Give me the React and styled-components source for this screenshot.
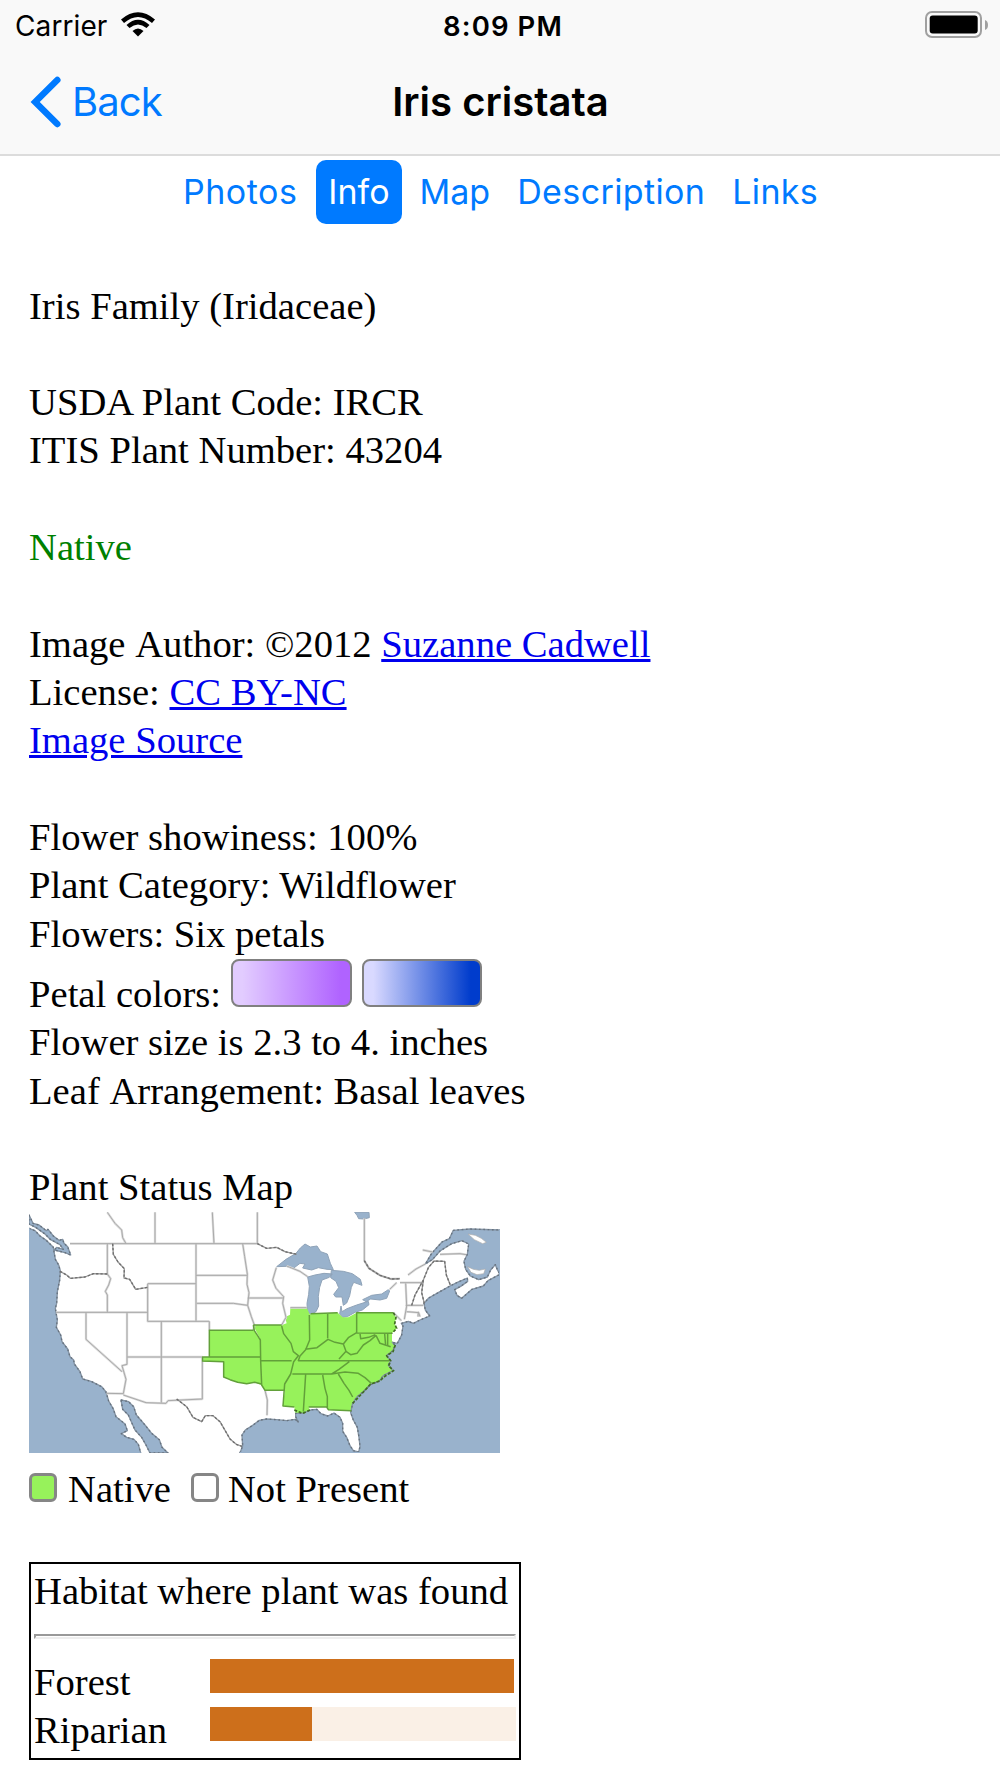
import React from "react";
import styled, { createGlobalStyle } from "styled-components";

const GlobalStyle = createGlobalStyle`
  * {
    box-sizing: border-box;
  }
  body {
    margin: 0;
    background: #fff;
  }
`;

const sans = `Inter, "Liberation Sans", sans-serif`;
const serif = `"Liberation Serif", "Times New Roman", serif`;

const Screen = styled.div`
  width: 1000px;
  height: 1778px;
  overflow: hidden;
  background: #fff;
`;

const Header = styled.header`
  height: 156px;
  background: #f9f9f9;
  border-bottom: 2px solid #dcdcdc;
  font-family: ${sans};
`;

const StatusBar = styled.div`
  display: grid;
  grid-template-columns: 1fr auto 1fr;
  align-items: center;
  height: 51px;
  padding: 0 12px 0 15px;
  line-height: 51px;
`;

const Carrier = styled.div`
  display: flex;
  align-items: center;
  padding-top: 1px;
  font-size: 28px;
  letter-spacing: 0.1px;

  svg {
    margin: -4px 0 0 14px;
  }
`;

const Time = styled.div`
  padding-left: 3px;
  font-size: 27.5px;
  font-weight: 600;
  letter-spacing: 1.1px;
`;

const BatteryBox = styled.div`
  display: flex;
  justify-content: flex-end;
  margin-top: -3px;
`;

const NavBar = styled.nav`
  display: grid;
  grid-template-columns: 1fr auto 1fr;
  align-items: center;
  height: 101px;
  padding: 0 30px;
`;

const BackButton = styled.a`
  display: flex;
  align-items: center;
  gap: 10px;
  color: #007aff;
  font-size: 40px;
  letter-spacing: -0.9px;
`;

const PageTitle = styled.h1`
  margin: 0;
  padding-left: 1px;
  font-size: 40px;
  font-weight: 600;
  letter-spacing: 0;
`;

const Tabs = styled.div`
  display: flex;
  justify-content: center;
  gap: 3px;
  padding: 4px 0 0 1px;
  font-family: ${sans};
`;

const Tab = styled.a`
  height: 64px;
  margin: ${({ $active }) => ($active ? "0 3px 0 4px" : "0")};
  padding: 0 12px;
  border-radius: 10px;
  background: ${({ $active }) => ($active ? "#007aff" : "transparent")};
  color: ${({ $active }) => ($active ? "#fff" : "#007aff")};
  font-size: 34px;
  letter-spacing: ${({ $tracking }) => $tracking}px;
  line-height: 63px;
`;

const Content = styled.main`
  padding: 57.5px 29px 0;
  font-family: ${serif};
  font-size: 38.64px;
  line-height: 48.33px;
`;

const Section = styled.section`
  margin-bottom: 48.33px;
`;

const Line = styled.div`
  color: ${({ $native }) => ($native ? "#008000" : "#000")};
  white-space: nowrap;
`;

// Set apart from the text before it, so that no kerning closes the space.
const CapitalA = styled.span`
  display: inline-block;
`;

const TextLink = styled.a`
  color: #0000ee;
  text-decoration: underline;
`;

const PetalLine = styled(Line)`
  display: flex;
  align-items: baseline;
  height: 60.4px;
  padding-top: 0.6px;
`;

const Swatch = styled.span`
  width: 120.5px;
  height: 48.5px;
  margin-left: 10px;
  border: 2.4px solid #808080;
  border-radius: 8px;
  background: linear-gradient(
    to right,
    ${({ $from }) => $from} 8%,
    ${({ $to }) => $to} 92%
  );
`;

const MapSvg = styled.svg`
  display: block;
  width: 471px;
  height: 241px;
`;

const Legend = styled.div`
  display: flex;
  align-items: baseline;
  margin-top: 12.4px;
`;

const LegendBox = styled.span`
  width: 28px;
  height: 29px;
  margin-right: 11px;
  border: 3px solid #868686;
  border-radius: 6px;
  background: ${({ $color }) => $color};

  &:not(:first-child) {
    margin: 0 9px 0 20px;
  }
`;

const Habitat = styled.section`
  width: 492px;
  height: 198px;
  margin-top: 48.5px;
  padding: 3px 3px 0;
  border: 2px solid #000;
`;

const Rule = styled.hr`
  height: 5px;
  margin: 19px 0 17px;
  border: 2px solid #eee;
  border-top-color: #999;
  border-left-color: #999;
`;

const HabitatRow = styled.div`
  display: flex;
  height: 48px;
`;

const HabitatName = styled.div`
  width: 176px;
  padding-top: 2px;
`;

const Track = styled.div`
  width: 306px;
  height: 34px;
  margin-top: 3px;
  background: #faf0e6;
`;

const Fill = styled.div`
  height: 100%;
  background: #cd6f1b;
  border-right: 2px solid ${({ $full }) => ($full ? "#fff" : "#cd6f1b")};
`;

const Wifi = () => (
  <svg width="34" height="25" viewBox="0 0 34 25">
    <path d="M0 7.500Q17-7 34 7.500L31 11Q17-1 3 11Z" />
    <path d="M5.500 13Q17 2.500 28.500 13L25.500 16Q17 9 8.500 16Z" />
    <path d="M11.500 19Q17 14 22.500 19L17 24.500Z" />
  </svg>
);

const Battery = () => (
  <svg width="63" height="28" viewBox="0 0 63 28">
    <rect
      x="1"
      y="1"
      width="55"
      height="25"
      rx="6"
      fill="none"
      stroke="#a0a0a0"
      strokeWidth="2"
    />
    <rect x="4.700" y="4.500" width="48" height="18" rx="3" />
    <path d="M60 9Q63 10 63 14T60 19Z" fill="#a0a0a0" />
  </svg>
);

const Chevron = () => (
  <svg width="32" height="52" viewBox="0 0 32 52">
    <path
      d="M27.300 4L5.200 26L27.300 48"
      fill="none"
      stroke="#007aff"
      strokeWidth="6.500"
      strokeLinecap="round"
      strokeLinejoin="miter"
    />
  </svg>
);

const seas = [
  // Pacific
  "27,85 45,92 60,108 80,122 100,142 102,155 106,178 116,195 121,212 119,240 112,275 110,310 106,325 108,337 112,360 109,382 122,405 126,425 143,447 150,470 161,480 163,492 180,515 188,537 215,545 245,560 258,576 266,603 279,625 288,650 315,672 322,692 304,701 320,712 342,718 355,733 362,759 27,759",
  // Strait of Georgia and Puget Sound
  "27,45 39,70 57,75 79,92 84,88 100,108 117,121 128,118 132,130 143,140 152,165 135,158 103,150 110,142 130,148 120,134 92,119 75,102 47,82 27,72",
  // Gulf of California
  "303,600 326,605 341,620 349,645 375,675 395,700 418,719 426,742 444,759 390,759 378,735 365,712 345,690 336,670 325,645 308,628",
  // Gulf of Mexico, Atlantic and Gulf of St Lawrence
  "660,759 668,737 666,705 676,690 698,676 718,661 740,657 770,659 800,662 826,658 835,667 827,650 827,640 848,640 872,630 890,628 903,641 923,648 942,639 960,652 968,670 968,694 980,712 990,737 1000,752 1016,756 1020,740 1017,712 1012,682 1000,660 992,638 998,610 1010,592 1032,573 1051,554 1077,544 1090,527 1119,512 1105,496 1112,482 1099,467 1119,452 1125,436 1117,427 1132,430 1145,405 1149,378 1144,370 1165,364 1180,370 1200,360 1229,348 1216,330 1212,310 1226,294 1256,277 1290,258 1312,247 1342,234 1343,244 1322,259 1304,269 1311,286 1325,295 1356,268 1390,258 1404,242 1440,223 1432,209 1426,194 1412,210 1402,231 1376,239 1351,228 1337,208 1332,184 1342,163 1346,132 1326,122 1295,131 1260,153 1238,178 1216,192 1235,160 1266,126 1288,116 1300,91 1350,87 1440,90 1440,759",
];

const lakes = [
  // Superior
  "770,200 798,178 828,160 841,144 855,132 871,141 891,138 902,155 922,162 931,190 940,209 921,208 895,203 875,210 848,204 855,192 840,190 819,206 799,199",
  // Michigan
  "863,231 885,225 912,220 937,222 928,232 906,240 899,262 895,289 896,318 888,335 872,343 862,334 861,310 866,283 868,259",
  // Huron
  "934,211 970,214 997,221 1021,238 1026,256 1001,247 994,262 989,287 980,309 970,316 966,291 947,291 941,283 956,263 948,244 932,233",
  // Erie
  "963,318 966,335 981,326 1010,315 1045,304 1047,314 1027,330 1005,337 982,350 968,352 959,342",
  // Ontario
  "1028,299 1055,286 1085,282 1105,269 1109,273 1100,295 1080,300 1052,297 1038,305",
  // James Bay
  "1004,37 1047,37 1048,53 1031,57 1016,56 1011,46",
];

const islands = [
  "1344,102 1366,106 1384,115 1399,127 1388,131 1363,119",
  "1343,200 1360,208 1378,211 1396,207 1391,221 1371,224 1353,217",
];

const nativeStates = [
  // Kansas
  "568,391 702,391 713,407 721,420 723,471 568,471",
  // Oklahoma
  "548,471 723,471 726,556 704,547 680,551 653,547 630,539 611,531 611,485 548,485",
  // Missouri to the Atlantic coast
  "699,375 785,375 800,370 795,352 810,344 811,325 861,325 869,343 910,340 953,338 968,352 985,352 1010,338 1120,338 1128,352 1124,372 1130,385 1116,400 1116,422 1126,435 1119,455 1100,467 1112,482 1106,498 1121,512 1096,528 1079,543 1052,552 1034,572 1010,591 998,610 996,633 925,629 921,621 866,621 870,631 850,641 825,638 823,621 788,618 795,570 735,571 724,555 721,483 720,415 711,399",
];

const borders = [
  "150,131 712,131",
  "108,337 383,337",
  "262,37 285,70 305,90 308,113 318,131",
  "405,37 405,131",
  "577,37 582,131",
  "712,37 712,131",
  "262,131 262,222 272,236 266,255 256,274 262,285 262,337",
  "383,251 528,251",
  "383,251 383,364 568,364",
  "528,131 528,364",
  "528,226 681,226",
  "668,131 674,170 682,222 681,253 687,278 683,316 694,350 703,375 700,390",
  "530,310 640,310 683,316",
  "683,294 790,294",
  "568,364 568,391",
  "198,337 198,418 306,515",
  "321,337 321,493 306,497 318,538 310,581 260,580",
  "321,471 548,471",
  "424,364 424,608",
  "310,585 378,608 438,610 444,602 547,597 547,472",
  "785,375 798,352 788,310 791,290 768,265 758,240 769,203",
  "811,323 860,323",
  "800,198 840,214 863,230",
  "1033,55 1033,182 1047,205 1080,226 1113,237 1140,236",
  "1140,248 1210,248",
  "1130,248 1109,268",
  "1157,250 1160,318 1153,358",
  "1157,316 1210,316",
  "1160,335 1196,338 1200,350",
  "1195,335 1194,350",
  "1216,192 1188,207 1164,225",
  "1260,163 1320,161 1338,164",
  "1208,150 1238,156",
  "1120,338 1144,362",
  "735,571 742,600 741,646",
];

const roughBorders = [
  "278,131 280,163 294,186 313,206 312,234 329,238 347,268 383,262",
  "120,214 140,225 151,235 195,231 220,221 262,222",
  "1175,316 1185,285 1199,260 1210,240 1225,203 1242,183 1274,184 1279,225 1291,255",
  "1210,240 1205,278 1213,310",
  "470,597 500,620 519,652 545,665 556,647 579,647 600,665 630,717 649,733 666,739",
  "712,131 740,145 770,142 795,155 830,163",
  "1033,182 1047,205 1080,226 1113,237 1140,236",
];

const nativeBorders = [
  "568,471 568,391 700,391",
  "548,485 548,471 721,471",
  "548,483 611,485 611,531 630,539 653,547 680,551 704,547 724,552",
  "700,375 785,375",
  "700,375 703,392 713,407 721,420 722,482 725,555 735,571 795,571",
  "722,482 815,482",
  "785,378 791,401 813,430 820,455 835,467 821,485 812,522 794,552 789,618 823,621",
  "868,345 869,420 857,449 840,468 835,482 1108,482",
  "872,341 953,338",
  "923,340 923,415",
  "855,448 891,443 924,418 945,427 970,432 985,413 1010,398",
  "1120,338 1010,338 1010,399 1116,400",
  "817,522 935,522 957,508 988,485",
  "970,432 978,454 957,477",
  "978,454 992,464 1011,460 1030,435 1050,422 1068,406",
  "1020,400 1022,416 1046,412 1066,404",
  "1068,406 1080,430 1112,440",
  "1094,402 1097,437",
  "1103,402 1103,437",
  "935,522 975,516 1015,520 1035,533 1054,550",
  "955,522 972,550 987,571 998,591",
  "908,525 915,565 922,590 922,622",
  "857,522 854,570 850,635",
  "866,621 920,621 925,629 994,632",
];

// Coast of the native states, drawn broken over the sea outline.
const nativeCoast = [
  "1120,338 1128,352 1124,372 1130,385 1116,400",
  "1126,435 1119,455 1100,467 1112,482 1106,498 1121,512 1096,528 1079,543 1052,552 1034,572 998,610",
  "823,630 848,640 870,630",
];

const toPath = (shapes) => shapes.map((points) => `M${points}`).join(" ");
const toArea = (shapes) => shapes.map((points) => `M${points}Z`).join(" ");

const StatusMap = () => (
  <MapSvg viewBox="27 36 1413 723" preserveAspectRatio="none">
    <rect x="27" y="36" width="1413" height="723" fill="#fff" />
    <path d={toArea(seas)} fill="#99b2cc" />
    <path d={toArea(lakes)} fill="#99b2cc" stroke="#8fa3b8" strokeWidth="3" />
    <path d={toArea(islands)} fill="#fff" stroke="#aaa" strokeWidth="2" />
    <path d={toArea(nativeStates)} fill="#97f25b" />
    <g fill="none" strokeLinejoin="round">
      <path d={toArea(seas)} stroke="#8292a3" strokeWidth="4" />
      <path
        d={toArea(seas)}
        stroke="#66717d"
        strokeWidth="4"
        strokeDasharray="5 8"
      />
      <path d={toPath(borders)} stroke="#dadada" strokeWidth="7" />
      <path d={toPath(borders)} stroke="#aaa" strokeWidth="3" />
      <path d={toPath(roughBorders)} stroke="#999" strokeWidth="4" />
      <path
        d={toPath(roughBorders)}
        stroke="#6e6e6e"
        strokeWidth="4"
        strokeDasharray="7 6"
      />
      <path d={toPath(nativeBorders)} stroke="#62a03a" strokeWidth="4.500" />
      <path
        d={toPath(nativeCoast)}
        stroke="#3f6b22"
        strokeWidth="5"
        strokeDasharray="9 5"
      />
    </g>
    <path
      d="M27,759V85M27,759H362M660,759H1440V90"
      fill="none"
      stroke="#99b2cc"
      strokeWidth="6"
    />
  </MapSvg>
);

const tabs = [
  { label: "Photos", tracking: 0.5 },
  { label: "Info", tracking: 0 },
  { label: "Map", tracking: 0 },
  { label: "Description", tracking: 0.38 },
  { label: "Links", tracking: 0.3 },
];

const habitats = [
  { name: "Forest", width: 306 },
  { name: "Riparian", width: 102 },
];

const App = () => {
  return (
    <Screen>
      <GlobalStyle />
      <Header>
        <StatusBar>
          <Carrier>
            Carrier
            <Wifi />
          </Carrier>
          <Time>8:09 PM</Time>
          <BatteryBox>
            <Battery />
          </BatteryBox>
        </StatusBar>
        <NavBar>
          <BackButton>
            <Chevron />
            Back
          </BackButton>
          <PageTitle>Iris cristata</PageTitle>
        </NavBar>
      </Header>
      <Tabs>
        {tabs.map(({ label, tracking }) => (
          <Tab key={label} $active={label === "Info"} $tracking={tracking}>
            {label}
          </Tab>
        ))}
      </Tabs>
      <Content>
        <Section>
          <Line>Iris Family (Iridaceae)</Line>
        </Section>
        <Section>
          <Line>USDA Plant Code: IRCR</Line>
          <Line>ITIS Plant Number: 43204</Line>
        </Section>
        <Section>
          <Line $native>Native</Line>
        </Section>
        <Section>
          <Line>
            Image <CapitalA>Author:</CapitalA> ©2012{" "}
            <TextLink>Suzanne Cadwell</TextLink>
          </Line>
          <Line>
            License: <TextLink>CC BY-NC</TextLink>
          </Line>
          <Line>
            <TextLink>Image Source</TextLink>
          </Line>
        </Section>
        <Section>
          <Line>Flower showiness: 100%</Line>
          <Line>Plant Category: Wildflower</Line>
          <Line>Flowers: Six petals</Line>
          <PetalLine>
            Petal colors:
            <Swatch $from="#e2ccff" $to="#b063ff" />
            <Swatch $from="#d9d9ff" $to="#003ccc" />
          </PetalLine>
          <Line>Flower size is 2.3 to 4. inches</Line>
          <Line>
            Leaf <CapitalA>Arrangement:</CapitalA> Basal leaves
          </Line>
        </Section>
        <Line>Plant Status Map</Line>
        <StatusMap />
        <Legend>
          <LegendBox $color="#97f25b" />
          Native
          <LegendBox $color="#fff" />
          Not Present
        </Legend>
        <Habitat>
          <Line>Habitat where plant was found</Line>
          <Rule />
          {habitats.map(({ name, width }) => (
            <HabitatRow key={name}>
              <HabitatName>{name}</HabitatName>
              <Track>
                <Fill $full={width > 300} style={{ width }} />
              </Track>
            </HabitatRow>
          ))}
        </Habitat>
      </Content>
    </Screen>
  );
};

export default App;
